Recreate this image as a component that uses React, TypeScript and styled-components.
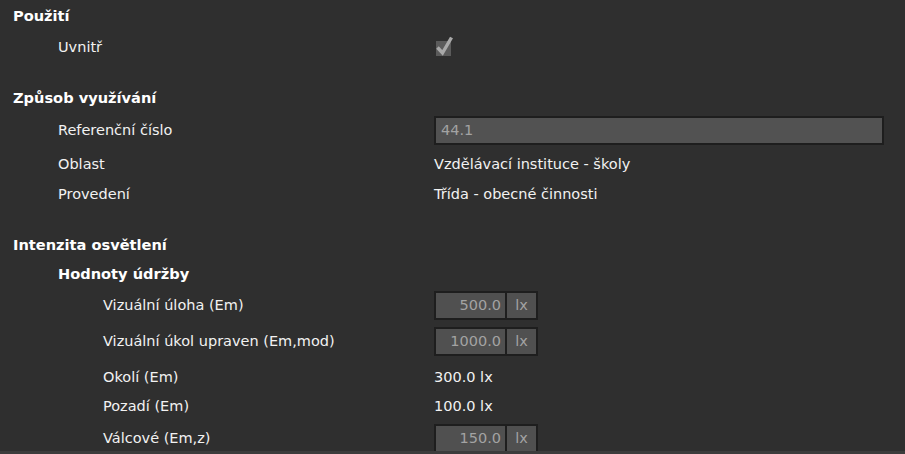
import React from "react";
import styled, { createGlobalStyle } from "styled-components";

const Global = createGlobalStyle`
  html, body { margin: 0; padding: 0; background: #2f2f2f; }
  body { font-family: "DejaVu Sans", Verdana, sans-serif; }
`;

const Page = styled.div`
  width: 905px;
  height: 454px;
  display: flex;
  flex-direction: column;
  background: #2f2f2f;
  overflow: hidden;
`;

const Content = styled.div`
  flex: 1;
  overflow: hidden;
  display: flex;
  flex-direction: column;
`;

const BottomEdge = styled.div`
  height: 3px;
  background: #3c3c3c;
  flex: none;
`;

const Section = styled.section<{ $gap?: number }>`
  display: flex;
  flex-direction: column;
  margin-top: ${(p) => p.$gap ?? 0}px;
`;

const Heading = styled.div<{ $indent?: number; $h?: number }>`
  height: ${(p) => p.$h ?? 30}px;
  display: flex;
  align-items: center;
  padding-left: ${(p) => 13 + (p.$indent ?? 0) * 45}px;
  font-weight: bold;
  font-size: 14.6px;
  color: #ffffff;
  flex: none;
`;

const Row = styled.div<{ $h?: number }>`
  height: ${(p) => p.$h ?? 30}px;
  display: grid;
  grid-template-columns: 434px 1fr;
  align-items: center;
  flex: none;
`;

const Label = styled.div<{ $indent: number }>`
  padding-left: ${(p) => 13 + p.$indent * 45}px;
  font-size: 14.5px;
  color: #f2f2f2;
  white-space: nowrap;
`;

const Value = styled.div`
  font-size: 14.5px;
  color: #f2f2f2;
  white-space: nowrap;
  display: flex;
  align-items: center;
`;

const TextField = styled.div`
  box-sizing: border-box;
  width: 450px;
  height: 29px;
  border: 2px solid #1e1e1e;
  background: #525252;
  color: #a3a3a3;
  font-size: 14.5px;
  padding-left: 5px;
  display: flex;
  align-items: center;
`;

const NumberGroup = styled.div`
  box-sizing: border-box;
  height: 29px;
  display: flex;
  gap: 2px;
  border: 2px solid #1e1e1e;
  background: #1e1e1e;
`;

const NumberField = styled.div`
  width: 69px;
  background: #505050;
  color: #a3a3a3;
  font-size: 14.5px;
  display: flex;
  align-items: center;
  justify-content: flex-end;
  padding-right: 4px;
  box-sizing: border-box;
`;

const UnitField = styled.div`
  width: 29px;
  background: #505050;
  color: #a3a3a3;
  font-size: 14.5px;
  display: flex;
  align-items: center;
  justify-content: center;
`;

const CheckBox = styled.div`
  position: relative;
  width: 15px;
  height: 15px;
  margin-left: 2px;
  margin-top: 2px;
  background: #5b5b5b;
`;

const CheckMark = styled.svg`
  position: absolute;
  left: -1px;
  top: -6px;
`;

const Num: React.FC<{ v: string }> = ({ v }) => (
  <NumberGroup>
    <NumberField>{v}</NumberField>
    <UnitField>lx</UnitField>
  </NumberGroup>
);

export default function App() {
  return (
    <>
      <Global />
      <Page>
        <Content>
          <Section>
            <Heading>Použití</Heading>
            <Row $h={34}>
              <Label $indent={1}>Uvnitř</Label>
              <Value>
                <CheckBox>
                  <CheckMark width="19" height="21" viewBox="0 0 19 21">
                    <path d="M2.5 12.5 L7.5 18 L16.5 2.5" fill="none" stroke="#a9a9a9" strokeWidth="3.4" strokeLinejoin="miter" />
                  </CheckMark>
                </CheckBox>
              </Value>
            </Row>
          </Section>
          <Section $gap={18}>
            <Heading>Způsob využívání</Heading>
            <Row $h={36}>
              <Label $indent={1}>Referenční číslo</Label>
              <Value>
                <TextField>44.1</TextField>
              </Value>
            </Row>
            <Row $h={31}>
              <Label $indent={1}>Oblast</Label>
              <Value>Vzdělávací instituce - školy</Value>
            </Row>
            <Row>
              <Label $indent={1}>Provedení</Label>
              <Value>Třída - obecné činnosti</Value>
            </Row>
          </Section>
          <Section $gap={20}>
            <Heading>Intenzita osvětlení</Heading>
            <Heading $indent={1} $h={28}>Hodnoty údržby</Heading>
            <Row $h={36}>
              <Label $indent={2}>Vizuální úloha (Em)</Label>
              <Value>
                <Num v="500.0" />
              </Value>
            </Row>
            <Row $h={36}>
              <Label $indent={2}>Vizuální úkol upraven (Em,mod)</Label>
              <Value>
                <Num v="1000.0" />
              </Value>
            </Row>
            <Row $h={35}>
              <Label $indent={2}>Okolí (Em)</Label>
              <Value>300.0 lx</Value>
            </Row>
            <Row $h={24}>
              <Label $indent={2}>Pozadí (Em)</Label>
              <Value>100.0 lx</Value>
            </Row>
            <Row $h={40}>
              <Label $indent={2}>Válcové (Em,z)</Label>
              <Value>
                <Num v="150.0" />
              </Value>
            </Row>
          </Section>
        </Content>
        <BottomEdge />
      </Page>
    </>
  );
}
